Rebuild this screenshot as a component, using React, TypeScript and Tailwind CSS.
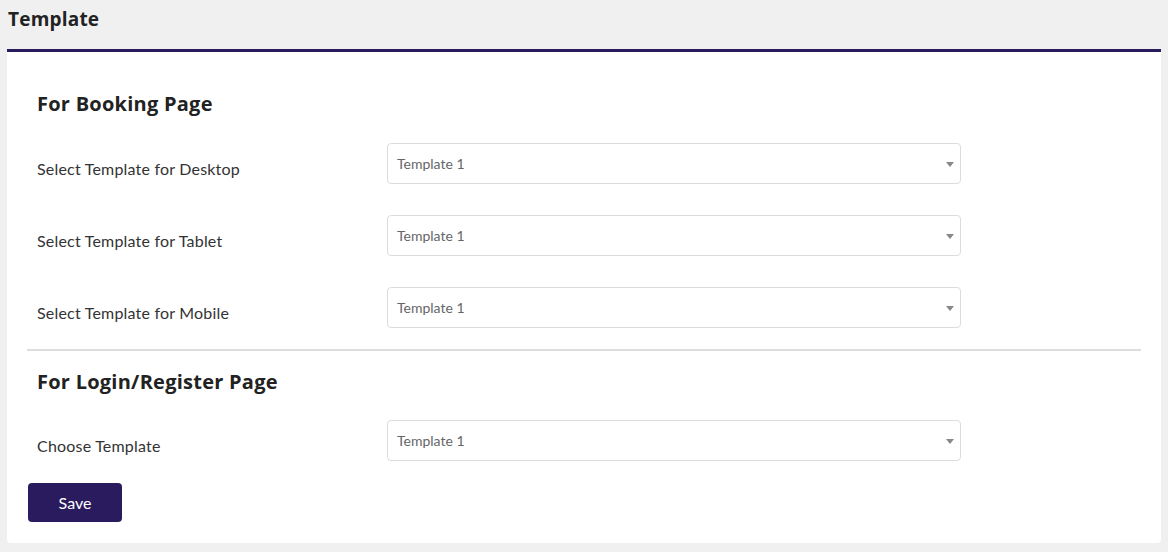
const FONT = { fontFamily: "Lato, 'Open Sans', sans-serif" };
const HEAD = { fontFamily: "'Open Sans', Lato, sans-serif" };

function TemplateSelect() {
  return (
    <div className="relative w-[574px]">
      <select
        defaultValue="1"
        className="h-[41px] w-full appearance-none rounded-[4px] border border-[#dcdcdc] bg-white pl-[9px] text-[14px] text-[#666] outline-none"
      >
        <option value="1">Template 1</option>
        <option value="2">Template 2</option>
        <option value="3">Template 3</option>
      </select>
      <span className="pointer-events-none absolute right-[7px] top-[19px] h-0 w-0 border-x-[4px] border-t-[5px] border-x-transparent border-t-[#888]" />
    </div>
  );
}

function Row({ label }: { label: string }) {
  return (
    <div className="flex items-start">
      <label className="w-[350px] pt-[14px] text-[16px] leading-6 tracking-[0.2px] text-[#333]">{label}</label>
      <TemplateSelect />
    </div>
  );
}

export default function App() {
  return (
    <div style={FONT} className="h-[552px] bg-[#f0f0f0] px-[7px]">
      <h1 style={HEAD} className="pl-px pt-[7px] text-[19px] font-bold leading-6 tracking-[0.2px] text-[#222]">Template</h1>
      <div className="mt-[18px] rounded-b-[4px] border-t-[3px] border-[#2a1b5e] bg-white px-5 pb-[21px] pt-[40px]">
        <div className="px-[10px]">
          <h2 style={HEAD} className="text-[20px] font-bold leading-6 tracking-[0.25px] text-[#222]">For Booking Page</h2>
          <div className="mt-[27px] flex flex-col gap-[31px]">
            <Row label="Select Template for Desktop" />
            <Row label="Select Template for Tablet" />
            <Row label="Select Template for Mobile" />
          </div>
        </div>
        <div className="mt-[21px] h-[2px] bg-[#dddddd]" />
        <div className="px-[10px] pt-[19px]">
          <h2 style={HEAD} className="text-[20px] font-bold leading-6 tracking-[0.25px] text-[#222]">For Login/Register Page</h2>
          <div className="mt-[26px]">
            <Row label="Choose Template" />
          </div>
        </div>
        <button className="ml-px mt-[22px] h-[39px] w-[94px] rounded-[4px] bg-[#2a1b5e] text-[16px] text-white">
          Save
        </button>
      </div>
    </div>
  );
}
